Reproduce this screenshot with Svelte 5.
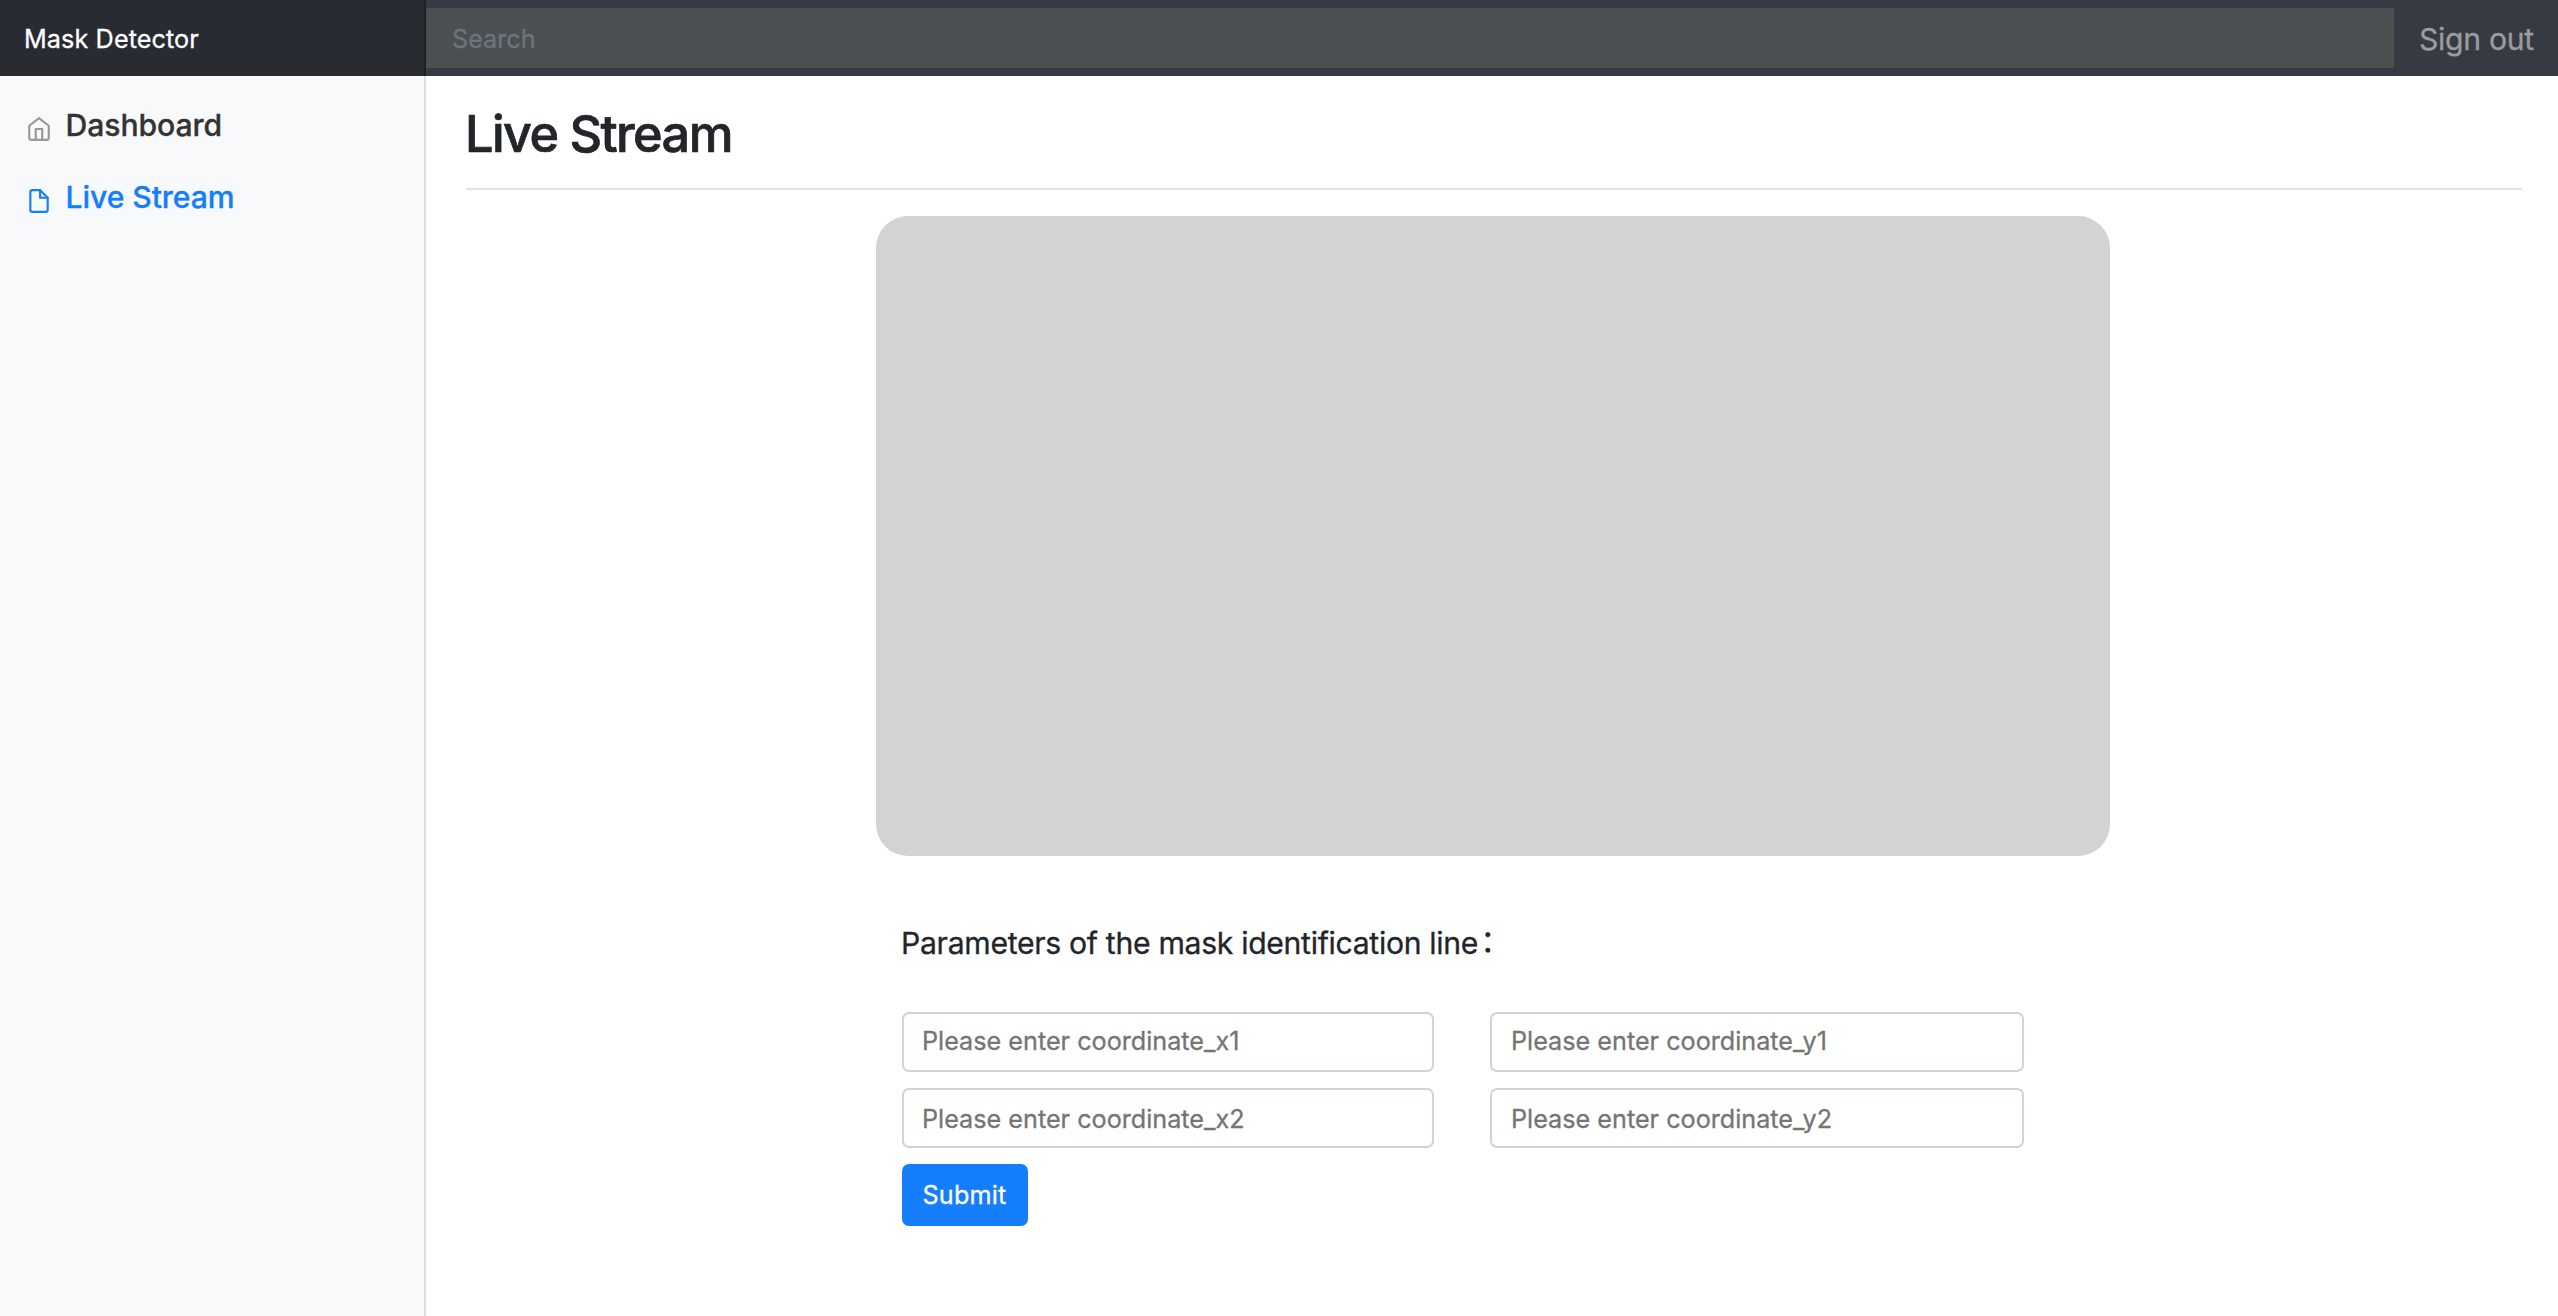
<script>
  const rows = [
    [
      { id: 'x1', placeholder: 'Please enter coordinate_x1' },
      { id: 'y1', placeholder: 'Please enter coordinate_y1' }
    ],
    [
      { id: 'x2', placeholder: 'Please enter coordinate_x2' },
      { id: 'y2', placeholder: 'Please enter coordinate_y2' }
    ]
  ];
</script>

<div class="app">
  <header>
    <a class="brand" href="#home">Mask Detector</a>
    <input class="search" type="text" placeholder="Search" aria-label="Search" />
    <a class="signout" href="#signout">Sign out</a>
  </header>

  <div class="body">
    <nav>
      <a class="link" href="#dashboard">
        <svg viewBox="0 0 24 24" aria-hidden="true">
          <path d="M3 9l9-7 9 7v11a2 2 0 0 1-2 2H5a2 2 0 0 1-2-2z" />
          <polyline points="9 22 9 12 15 12 15 22" />
        </svg>
        <span>Dashboard</span>
      </a>
      <a class="link active" href="#live">
        <svg viewBox="0 0 24 24" aria-hidden="true">
          <path d="M13 2H6a2 2 0 0 0-2 2v16a2 2 0 0 0 2 2h12a2 2 0 0 0 2-2V9z" />
          <polyline points="13 2 13 9 20 9" />
        </svg>
        <span>Live Stream</span>
      </a>
    </nav>

    <main>
      <h1>Live Stream</h1>
      <section class="stream">
        <div class="video"></div>
        <form>
          <p class="caption">Parameters of the mask identification line<span class="colon">：</span></p>
          {#each rows as row, i}
            <div class="row" class:second={i === 1}>
              {#each row as field (field.id)}
                <input type="text" name={field.id} placeholder={field.placeholder} aria-label={field.placeholder} />
              {/each}
            </div>
          {/each}
          <button type="button">Submit</button>
        </form>
      </section>
    </main>
  </div>
</div>

<style>
  :global(body) {
    margin: 0;
    background: #fff;
  }

  .app {
    display: flex;
    flex-direction: column;
    height: 100vh;
    overflow: hidden;
    color: #222529;
    font-family: Inter, 'Noto Sans CJK SC', sans-serif;
    font-size: 25.2px;
    -webkit-text-stroke: 0.3px;
  }

  .app *,
  .app {
    box-sizing: border-box;
  }

  a {
    color: inherit;
    text-decoration: none;
  }

  input,
  button {
    margin: 0;
    font: inherit;
    outline: 0;
  }

  header {
    display: flex;
    flex: none;
    align-items: center;
    height: 76px;
    background: #363a42;
  }

  .brand {
    flex: none;
    width: 426px;
    height: 76px;
    padding: 2px 0 0 24px;
    color: #fff;
    line-height: 74px;
    letter-spacing: 0.1px;
    background: rgba(0, 0, 0, 0.25);
    box-shadow: inset -2px 0 0 rgba(0, 0, 0, 0.25);
  }

  .search {
    flex: 1;
    min-width: 0;
    height: 60px;
    padding: 2px 26px 0;
    color: #fff;
    background: #4a4f52;
    border: 0;
    border-radius: 0;
  }

  .search::placeholder {
    color: #6c757d;
    opacity: 1;
  }

  .signout {
    flex: none;
    width: 164px;
    padding: 2px 0 0 25px;
    color: #9a9ca0;
    font-size: 30.2px;
    line-height: 74px;
    letter-spacing: -0.3px;
  }

  .body {
    display: flex;
    flex: 1;
    min-height: 0;
  }

  nav {
    flex: none;
    width: 426px;
    padding-top: 13px;
    background: #f8f9fb;
    box-shadow: inset -2px 0 0 rgba(0, 0, 0, 0.1);
  }

  .link {
    display: flex;
    align-items: center;
    gap: 13.5px;
    height: 72px;
    padding-left: 26px;
    color: #333;
    font-size: 30.2px;
    font-weight: 500;
    letter-spacing: -0.1px;
  }

  .link svg {
    width: 26px;
    height: 26px;
    margin-top: 8px;
    fill: none;
    stroke: #999;
    stroke-width: 2;
    stroke-linecap: round;
    stroke-linejoin: round;
  }

  .link.active {
    color: #157efb;
  }

  .link.active svg {
    stroke: currentColor;
  }

  main {
    flex: 1;
    padding: 26px 36px 0 40px;
  }

  h1 {
    margin: 0;
    padding-bottom: 22px;
    border-bottom: 2px solid #dee2e6;
    font-size: 50.4px;
    font-weight: 500;
    line-height: 64px;
    letter-spacing: -1.55px;
    text-indent: -1px;
    -webkit-text-stroke: 0.7px;
  }

  .stream {
    width: 1234px;
    margin: 26px 0 0 410px;
  }

  .video {
    height: 640px;
    background: #d3d3d3;
    border-radius: 32px;
  }

  form {
    display: flex;
    flex-direction: column;
    align-items: flex-start;
    padding: 67px 86px 0 26px;
  }

  .caption {
    height: 40px;
    margin: 0 0 49px -1px;
    font-size: 30.2px;
    line-height: 40px;
    letter-spacing: -0.32px;
    white-space: nowrap;
  }

  .colon {
    margin-left: 2px;
    line-height: 1;
    vertical-align: 2px;
  }

  .row {
    display: grid;
    grid-template-columns: 532px 534px;
    gap: 56px;
    margin-bottom: 16px;
  }

  .row input {
    min-width: 0;
    height: 60px;
    padding: 0 18px 2px;
    color: #495057;
    background: #fff;
    border: 2px solid #ced4da;
    border-radius: 7px;
  }

  .row input:last-child {
    padding-left: 19px;
  }

  .row.second input {
    padding-top: 2px;
    padding-bottom: 0;
  }

  .row input::placeholder {
    color: #757575;
    opacity: 1;
  }

  button {
    width: 126px;
    height: 62px;
    padding: 0 1px 0 0;
    color: #fff;
    letter-spacing: 0.2px;
    background: #157efb;
    border: 0;
    border-radius: 7px;
  }
</style>
